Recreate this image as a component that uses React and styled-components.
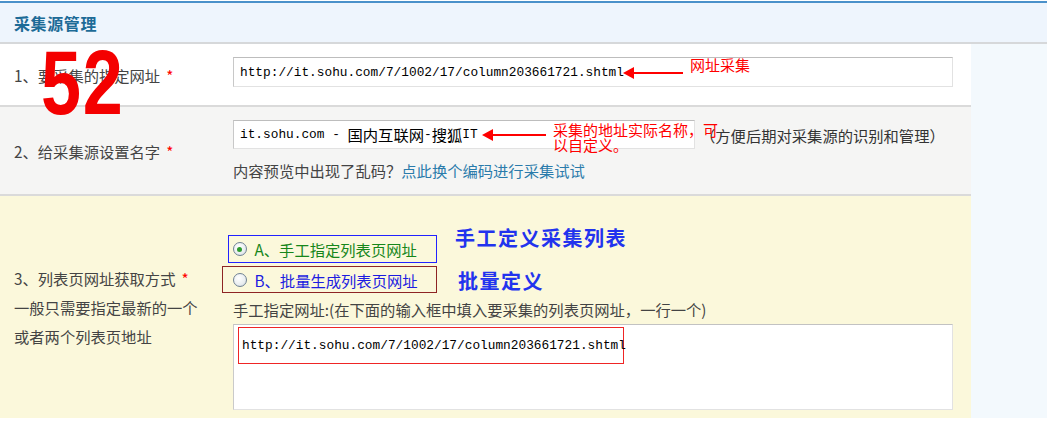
import React from "react";
import styled, { createGlobalStyle } from "styled-components";

const GlobalStyle = createGlobalStyle`
  body {
    margin: 0;
    background: #fff;
    font-family: "Noto Sans CJK SC", "Noto Sans", sans-serif;
  }
`;

const CJK = `"Noto Sans CJK SC", "Noto Sans", sans-serif`;
const MONO = `"Liberation Mono", "Noto Sans CJK SC", monospace`;

const Page = styled.div`
  position: relative;
  width: 1047px;
  padding-top: 1px;
`;

const Header = styled.div`
  display: flex;
  align-items: center;
  height: 39px;
  padding-left: 14px;
  background: #eef5fd;
  border-top: 2px solid #4a91ca;
  border-bottom: 2px solid #d6d8da;
`;

const Title = styled.span`
  font-size: 16px;
  font-weight: bold;
  letter-spacing: 0.6px;
  color: #1d6b97;
`;

const Body = styled.div`
  display: flex;
`;

const Main = styled.div`
  width: 971px;
`;

const Side = styled.div`
  flex: 1;
  background: #f3f9fd;
`;

const tones = {
  white: "#ffffff",
  gray: "#f5f5f4",
  cream: "#fbf8db",
};

const Row = styled.div`
  display: grid;
  grid-template-columns: 233px 1fr;
  background: ${({ $tone }) => tones[$tone]};
  border-bottom: ${({ $last }) => ($last ? "none" : "2px solid #dadada")};
`;

const Label = styled.div`
  display: flex;
  flex-direction: column;
  justify-content: center;
  padding-left: 14px;
  font-size: 15.3px;
  line-height: ${({ $lh }) => $lh || 22}px;
  color: #444;
  font-family: ${CJK};
`;

const Star = styled.span`
  color: #f00;
  margin-left: 6px;
`;

const Field = styled.div`
  position: relative;
  display: flex;
  flex-direction: column;
  padding: ${({ $pad }) => $pad};
`;

const Line = styled.div`
  display: flex;
  align-items: center;
`;

/* read-only text boxes, drawn like the old form inputs */
const TextBox = styled.div`
  box-sizing: border-box;
  display: flex;
  align-items: center;
  width: ${({ $w }) => $w}px;
  height: ${({ $h }) => $h}px;
  padding-left: 6px;
  border: 1px solid #e2e2e2;
  border-top-color: #bdbdbd;
  border-left-color: #c8c8c8;
  background: #fff;
  font-family: ${MONO};
  font-size: 12.8px;
  color: #000;
  white-space: pre;
`;

const Wide = styled.span`
  font-family: ${CJK};
  font-size: 15.3px;
  line-height: 1;
`;

const Aside = styled.span`
  margin-left: 5px;
  font-size: 15.3px;
  color: #333;
  white-space: nowrap;
`;

const Hint = styled.div`
  margin-top: ${({ $mt }) => $mt}px;
  font-size: 15.3px;
  line-height: ${({ $lh }) => $lh}px;
  color: #444;
  white-space: nowrap;
`;

const Link = styled.a`
  color: #2a7bab;
  text-decoration: none;
`;

const OptionBox = styled.label`
  box-sizing: border-box;
  display: flex;
  align-items: center;
  width: ${({ $w }) => $w}px;
  height: ${({ $h }) => $h}px;
  margin-left: -${({ $shift }) => $shift}px;
  margin-top: ${({ $mt }) => $mt || 0}px;
  padding-left: ${({ $shift }) => $shift - 1.5}px;
  border: 1.5px solid ${({ $frame }) => $frame};
  font-size: 15.3px;
  color: ${({ $ink }) => $ink};
  white-space: nowrap;
`;

const Radio = styled.span`
  box-sizing: border-box;
  position: relative;
  width: 14px;
  height: 14px;
  margin-right: 8px;
  border-radius: 50%;
  border: 1px solid #6f8193;
  background: radial-gradient(circle at 40% 35%, #ffffff 0%, #e9edf0 60%, #c9d1d8 100%);
  flex-shrink: 0;

  &::after {
    content: "";
    display: ${({ $on }) => ($on ? "block" : "none")};
    position: absolute;
    left: 3.5px;
    top: 3.5px;
    width: 5px;
    height: 5px;
    border-radius: 50%;
    background: #2e9b2e;
  }
`;

const ListBox = styled.div`
  box-sizing: border-box;
  width: 720px;
  height: 86px;
  margin-top: 5px;
  padding: 2px 4px;
  background: #fff;
  border: 1px solid #e2e2e2;
  border-top-color: #c2c2c2;
  border-left-color: #cacaca;
`;

const Marked = styled.div`
  box-sizing: border-box;
  display: flex;
  align-items: center;
  width: 386px;
  height: 37px;
  padding-left: 3px;
  border: 1.5px solid #ef2525;
  font-family: ${MONO};
  font-size: 12.8px;
  color: #000;
`;

/* hand-drawn notes laid over the form */
const Note = styled.div`
  position: absolute;
  left: ${({ $x }) => $x}px;
  top: ${({ $y }) => $y}px;
  color: ${({ $ink }) => $ink};
  font-size: ${({ $size }) => $size}px;
  line-height: ${({ $lh }) => $lh}px;
  font-weight: ${({ $bold }) => ($bold ? "bold" : "normal")};
  letter-spacing: ${({ $ls }) => $ls || 0}px;
  white-space: nowrap;
  pointer-events: none;
`;

const Arrow = styled.svg`
  position: absolute;
  left: ${({ $x }) => $x}px;
  top: ${({ $y }) => $y}px;
`;

const Stamp = styled.div`
  position: absolute;
  left: 41px;
  top: 38px;
  font-family: "Liberation Sans", Arial, sans-serif;
  font-weight: bold;
  font-size: 90px;
  line-height: 90px;
  color: #f40000;
  transform: scaleX(0.8);
  transform-origin: left top;
  letter-spacing: 2px;
`;

function RedArrow({ x, y, len }) {
  return (
    <Arrow $x={x} $y={y} width={len} height={14} viewBox={`0 0 ${len} 14`}>
      <line x1={8} y1={7} x2={len} y2={7} stroke="#f00" strokeWidth="2" />
      <polygon points="0,7 11,1 11,13" fill="#f00" />
    </Arrow>
  );
}

const URL = "http://it.sohu.com/7/1002/17/column203661721.shtml";

export default function App() {
  return (
    <Page>
      <GlobalStyle />
      <Header>
        <Title>采集源管理</Title>
      </Header>
      <Body>
        <Main>
          <Row $tone="white">
            <Label>
              <span>
                1、要采集的指定网址<Star>*</Star>
              </span>
            </Label>
            <Field $pad="13px 0 18px">
              <TextBox $w={720} $h={30}>{URL}</TextBox>
              <RedArrow x={390} y={22} len={60} />
              <Note $x={457} $y={13} $ink="#f00" $size={15} $lh={16}>
                网址采集
              </Note>
            </Field>
          </Row>

          <Row $tone="gray">
            <Label>
              <span>
                2、给采集源设置名字<Star>*</Star>
              </span>
            </Label>
            <Field $pad="13px 0 13px">
              <Line>
                <TextBox $w={462} $h={29}>
                  it.sohu.com - <Wide>国内互联网</Wide>-<Wide>搜狐</Wide>IT
                </TextBox>
                <Aside>（方便后期对采集源的识别和管理）</Aside>
              </Line>
              <Hint $mt={10} $lh={22}>
                内容预览中出现了乱码？<Link href="#">点此换个编码进行采集试试</Link>
              </Hint>
              <RedArrow x={249} y={21} len={64} />
              <Note $x={320} $y={15} $ink="#f00" $size={15} $lh={15}>
                采集的地址实际名称，可
                <br />
                以自定义。
              </Note>
            </Field>
          </Row>

          <Row $tone="cream" $last>
            <Label $lh={29}>
              <span>
                3、列表页网址获取方式<Star>*</Star>
              </span>
              <span>一般只需要指定最新的一个</span>
              <span>或者两个列表页地址</span>
            </Label>
            <Field $pad="39px 0 8px">
              <OptionBox $w={209} $h={28} $shift={5} $frame="#2222ff" $ink="#16861a">
                <Radio $on />
                A、手工指定列表页网址
              </OptionBox>
              <OptionBox $w={215} $h={27} $shift={11} $mt={3} $frame="#8e2424" $ink="#1c1ce0">
                <Radio />
                B、批量生成列表页网址
              </OptionBox>
              <Hint $mt={6} $lh={20}>
                手工指定网址:(在下面的输入框中填入要采集的列表页网址，一行一个)
              </Hint>
              <ListBox>
                <Marked>{URL}</Marked>
              </ListBox>
              <Note $x={222} $y={30} $ink="#2233ee" $size={20} $lh={24} $ls={1.5} $bold>
                手工定义采集列表
              </Note>
              <Note $x={225} $y={73} $ink="#2233ee" $size={20} $lh={24} $ls={1.5} $bold>
                批量定义
              </Note>
            </Field>
          </Row>
        </Main>
        <Side />
      </Body>
      <Stamp>52</Stamp>
    </Page>
  );
}
